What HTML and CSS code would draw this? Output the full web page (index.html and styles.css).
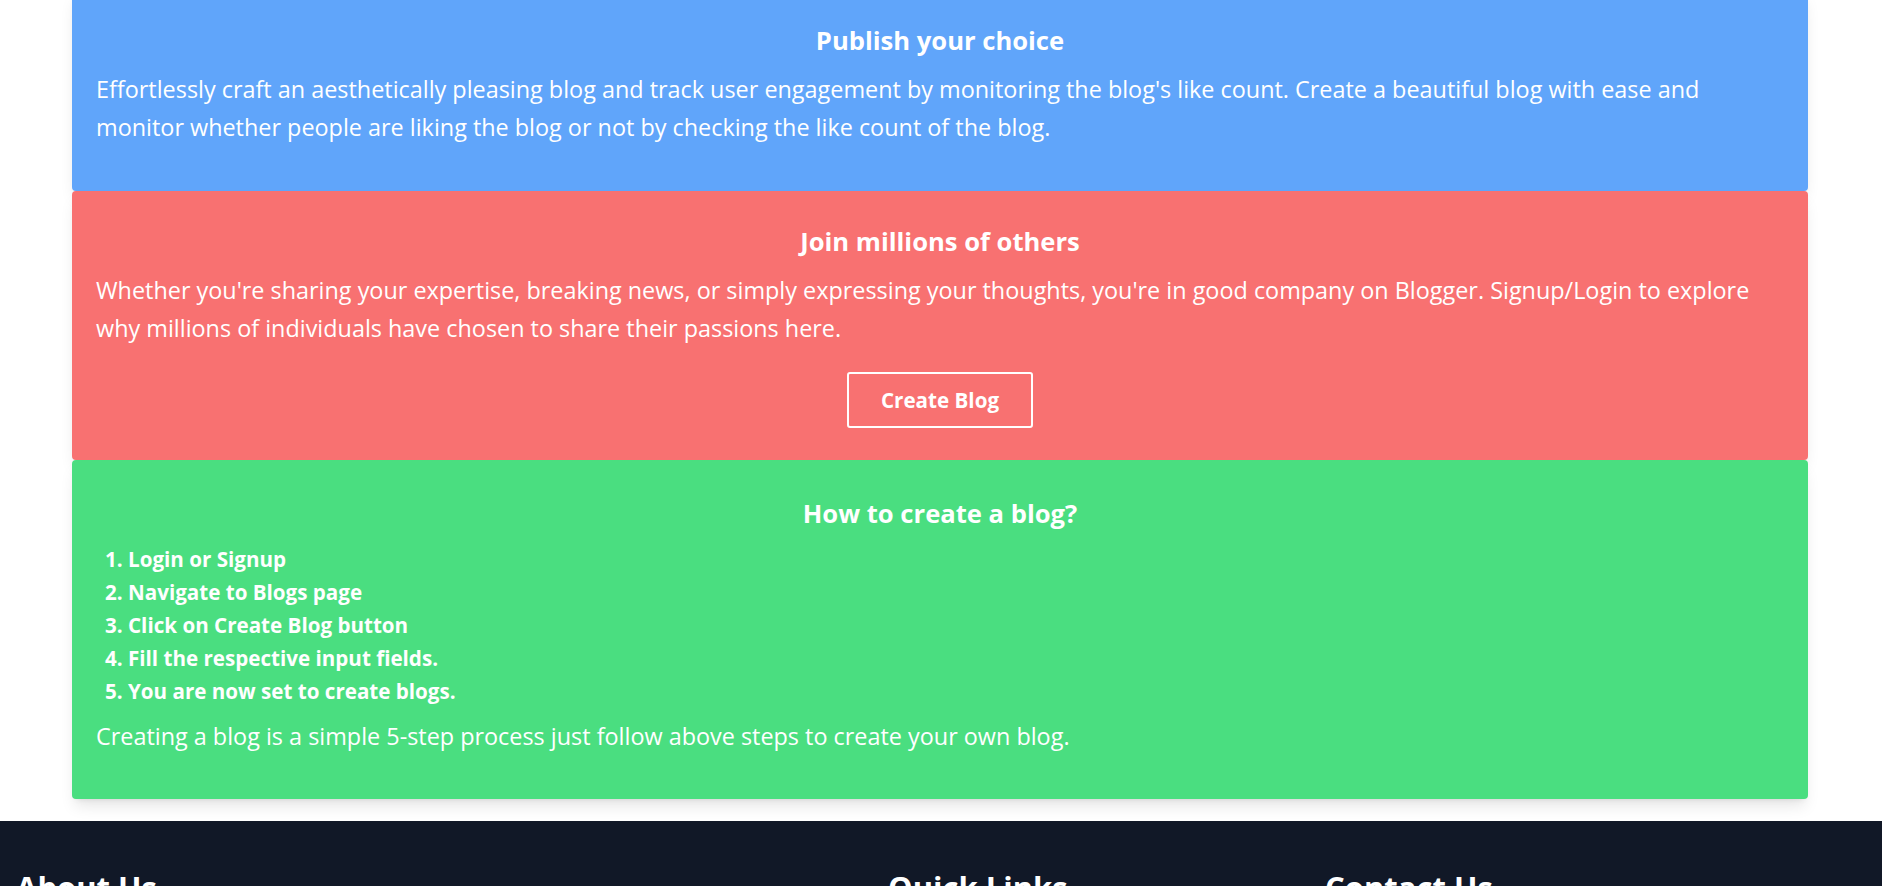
FILE: index.html
```html
<!DOCTYPE html>
<html lang="en">
<head>
<meta charset="utf-8">
<title>Blogger</title>
<link rel="stylesheet" href="styles.css">
</head>
<body>
<main class="features">
  <section class="card card-blue">
    <h2 class="card-title">Publish your choice</h2>
    <p class="card-text">Effortlessly craft an aesthetically pleasing blog and track user engagement by monitoring the blog's like count. Create a beautiful blog with ease and monitor whether people are liking the blog or not by checking the like count of the blog.</p>
  </section>
  <section class="card card-red">
    <h2 class="card-title">Join millions of others</h2>
    <p class="card-text">Whether you're sharing your expertise, breaking news, or simply expressing your thoughts, you're in good company on Blogger. Signup/Login to explore why millions of individuals have chosen to share their passions here.</p>
    <div class="card-action"><button class="btn-outline">Create Blog</button></div>
  </section>
  <section class="card card-green">
    <h2 class="card-title">How to create a blog?</h2>
    <ol class="steps">
      <li>Login or Signup</li>
      <li>Navigate to Blogs page</li>
      <li>Click on Create Blog button</li>
      <li>Fill the respective input fields.</li>
      <li>You are now set to create blogs.</li>
    </ol>
    <p class="card-text">Creating a blog is a simple 5-step process just follow above steps to create your own blog.</p>
  </section>
</main>
<footer class="site-footer">
  <div class="footer-col"><h3 class="footer-title">About Us</h3></div>
  <div class="footer-col"><h3 class="footer-title">Quick Links</h3></div>
  <div class="footer-col"><h3 class="footer-title">Contact Us</h3></div>
</footer>
</body>
</html>
```

FILE: styles.css
```css
* { box-sizing: border-box; }
html, body { margin: 0; padding: 0; }
body {
  font-family: "Open Sans", "Noto Sans", sans-serif;
  background: #ffffff;
  color: #ffffff;
}
.features {
  margin: -10px 74px 22px 72px;
  display: flex;
  flex-direction: column;
}
.card {
  padding: 32px 24px;
  border-radius: 4px;
  box-shadow: 0 10px 15px -3px rgba(0,0,0,0.1), 0 4px 6px -4px rgba(0,0,0,0.1);
}
.card-blue { background: #60a5fa; }
.card-red { background: #f87171; }
.card-green { background: #4ade80; padding-top: 35px; }
.card-title {
  margin: 0 0 9.6px;
  text-align: center;
  font-size: 25.6px;
  line-height: 38.4px;
  font-weight: 700;
}
.card-text {
  margin: 0 0 12px;
  font-size: 23.4px;
  line-height: 38.4px;
  font-weight: 400;
}
.card-red .card-text { margin-bottom: 0; }
.card-action {
  display: flex;
  justify-content: center;
  margin-top: 24px;
}
.btn-outline {
  width: 186px;
  height: 56px;
  background: transparent;
  border: 2px solid #ffffff;
  border-radius: 3px;
  color: #ffffff;
  font-family: inherit;
  font-size: 20.6px;
  font-weight: 700;
}
.steps {
  margin: 0 0 9px;
  padding-left: 32px;
  font-size: 20.6px;
  line-height: 33px;
  font-weight: 700;
}
.site-footer {
  background: #111827;
  padding: 48px 16px 40px;
  display: grid;
  grid-template-columns: 872px 437px 1fr;
}
.footer-title {
  margin: 0;
  font-size: 31px;
  line-height: 36px;
  font-weight: 700;
}
```
